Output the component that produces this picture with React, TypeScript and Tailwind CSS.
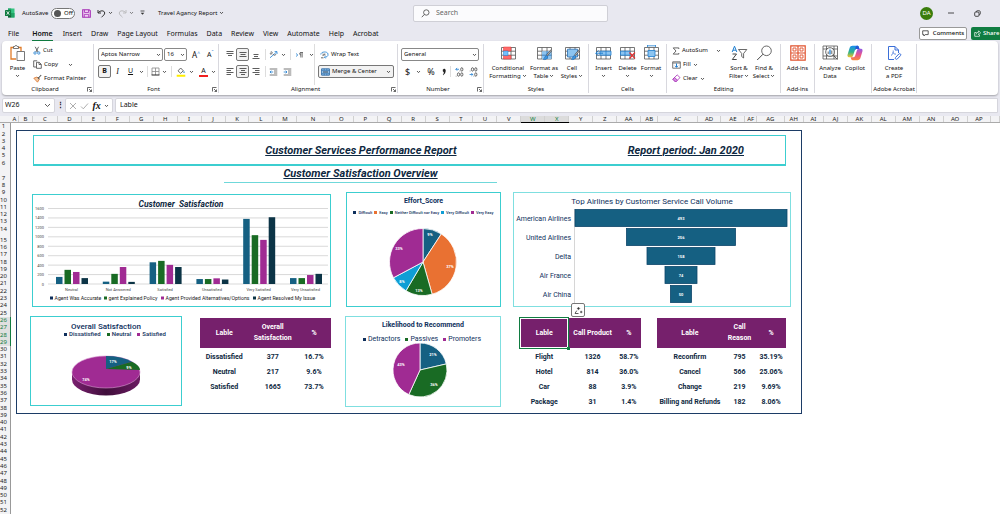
import React from "react";

const UI = "font-['Noto_Sans',sans-serif]";
const SHEET = "font-[Roboto,sans-serif]";

/* ---------- small icons ---------- */

type IconProps = { w?: number; h?: number; vb?: string; className?: string; children: React.ReactNode };

function Icon({ w = 10, h = 10, vb, className = "", children }: IconProps) {
  return (
    <svg
      width={w}
      height={h}
      viewBox={vb ?? `0 0 ${w} ${h}`}
      fill="none"
      stroke="#444"
      strokeWidth="0.8"
      className={`shrink-0 ${className}`}
      aria-hidden="true"
    >
      {children}
    </svg>
  );
}

function Chevron({ className = "" }: { className?: string }) {
  return (
    <Icon w={5} h={4} className={className}>
      <path d="M1 1 2.5 2.6 4 1" stroke="#333" />
    </Icon>
  );
}

function Launcher() {
  return (
    <Icon w={5} h={5}>
      <path d="M.5 4.500V.5h4M2 2l2.500 2.500M4.500 2.500v2h-2" stroke="#444" />
    </Icon>
  );
}

function AlignIcon({ lines }: { lines: [number, number, number][] }) {
  return (
    <Icon w={8} h={9}>
      {lines.map(([x1, x2, y]) => (
        <path key={y} d={`M${x1} ${y}H${x2}`} stroke="#333" />
      ))}
    </Icon>
  );
}

function CellGrid({ children }: { children?: React.ReactNode }) {
  return (
    <Icon w={17} h={16}>
      <path d="M1.500 2.500h14v11.500h-14zM1.500 6.200h14M1.500 10.200h14M6 2.500V14M11 2.500V14" stroke="#555" />
      {children}
    </Icon>
  );
}

const icons = {
  excel: (
    <Icon w={10} h={10}>
      <path d="M3 .5h6.500v9H3z" fill="#33c481" stroke="none" />
      <path d="M3 .5h3.200v4.500H3zM6.200 5h3.300v4.500H6.200z" fill="#21a366" stroke="none" />
      <path d="M3 5h3.200v4.500H3z" fill="#185c37" stroke="none" />
      <rect x="0" y="2" width="6" height="6" rx=".6" fill="#107c41" stroke="none" />
      <path d="M1.700 3.300 4.300 6.700M4.300 3.300 1.700 6.700" stroke="#fff" />
    </Icon>
  ),
  save: (
    <Icon w={9} h={9}>
      <path d="M.7.7h6.500l1.100 1.100v6.500H.7z" fill="#efd3f3" stroke="#a52fb5" strokeWidth="1.100" />
      <path d="M2.500.9v2.600h4V.9M2.300 8.200V5.400h4.400v2.800" stroke="#a52fb5" />
    </Icon>
  ),
  undo: (
    <Icon w={9} h={9}>
      <path d="M1 1v3h3M1.200 3.800C3 1.300 7.500 1 7.700 4 7.800 5.500 6.200 6.500 4.500 8.300" stroke="#333" strokeWidth="1" />
    </Icon>
  ),
  redo: (
    <Icon w={9} h={9}>
      <path d="M8 1v3H5M7.800 3.800C6 1.300 1.500 1 1.300 4 1.200 5.500 2.800 6.500 4.500 8.300" stroke="#aaa" strokeWidth="1" />
    </Icon>
  ),
  customize: (
    <Icon w={5} h={6}>
      <path d="M.5 1h4" stroke="#333" />
      <path d="M.7 2.800h3.600L2.500 4.800z" fill="#333" stroke="none" />
    </Icon>
  ),
  search: (
    <Icon w={9} h={9}>
      <circle cx="5.300" cy="3.500" r="2.700" />
      <path d="M3.300 5.500.8 8.200" />
    </Icon>
  ),
  comment: (
    <Icon w={7} h={7}>
      <path d="M.7.8h5.500v3.800H3.200L1.900 6V4.600H.7z" stroke="#333" />
    </Icon>
  ),
  share: (
    <Icon w={7} h={7}>
      <path d="M2.500 2.500H.7v3.800h4.800V4.800M2.300 4.300c.2-1.500 1.200-2.100 2.300-2.100V.8l2 2-2 2V3.500" stroke="#fff" strokeWidth=".7" />
    </Icon>
  ),
  paste: (
    <Icon w={17} h={17}>
      <path d="M5 2.500H2v11.500h5" stroke="#e07b28" strokeWidth="1.300" />
      <path d="M9 2.500h3V6" stroke="#e07b28" strokeWidth="1.300" />
      <path d="M4.500 3.500v-2h1.300c.3-1.500 2.100-1.500 2.400 0h1.300v2z" fill="#fff" stroke="#555" />
      <path d="M8 6.500h7.500v9H8z" fill="#fff" stroke="#555" />
    </Icon>
  ),
  cut: (
    <Icon w={8} h={9}>
      <path d="M2.200.8 5 6M5.600.8 2.900 6" stroke="#444" />
      <circle cx="2" cy="7" r="1.200" stroke="#1f7fd1" />
      <circle cx="5.800" cy="7" r="1.200" stroke="#1f7fd1" />
    </Icon>
  ),
  copy: (
    <Icon w={9} h={9}>
      <path d="M3 7H.7V.8h3.500M3.500 2.300h2.800L8.300 4.300v4H3.500zM6 2.500v2h2" stroke="#444" />
    </Icon>
  ),
  painter: (
    <Icon w={9} h={9}>
      <path d="M.8 4.200 4 3l2.300 2.300L4.500 8.200z" fill="#f3c9a4" stroke="#d9742b" />
      <path d="m4.700 3.400 1.700 1.700M5.500 4 8.200 1" stroke="#555" strokeWidth="1.100" />
    </Icon>
  ),
  borders: (
    <Icon w={9} h={9}>
      <path d="M1 1h7M1 1v7M8 1v7M4.500 1v7M1 4.500h7" stroke="#888" />
      <path d="M.6 8h7.800" stroke="#222" strokeWidth="1.100" />
    </Icon>
  ),
  fillColor: (
    <Icon w={10} h={10}>
      <path d="M2 3.800 4.700 1l2.600 2.800L4.600 6.300z" stroke="#444" />
      <path d="M8 4c.9 1.200.9 1.900 0 2-.9-.1-.9-.8 0-2z" fill="#1f7fd1" stroke="none" />
      <path d="M.7 7.800h8.600v2H.7z" fill="#ffee00" stroke="none" />
    </Icon>
  ),
  orientation: (
    <Icon w={9} h={9}>
      <path d="m1 7.800 6.800-6M8 4V1.600H5.600" stroke="#1f7fd1" />
      <path d="M1.500 2.200c1.500-1 2.300.5 1.300 1.500S.8 4 1.500 3.200M4 4.200c1 1.500 3 1.300 2.600 0" stroke="#444" />
    </Icon>
  ),
  direction: (
    <Icon w={9} h={8}>
      <path d="M1 2.500 2.800 4 1 5.500" stroke="#1f7fd1" />
      <path d="M8 1.500H5.500M5.800 1.500v5M7.200 1.500v5M5.800 1.500C4.200 1.500 4.200 4 5.800 4" stroke="#444" strokeWidth=".7" />
    </Icon>
  ),
  outdent: (
    <Icon w={9} h={8}>
      <path d="M.7 1h7.600M.7 7h7.600M5 3h3.300M5 5h3.300" stroke="#555" />
      <path d="M4.200 4H1M2.300 2.700 1 4l1.300 1.300" stroke="#1f7fd1" />
    </Icon>
  ),
  indent: (
    <Icon w={9} h={8}>
      <path d="M.7 1h7.600M.7 7h7.600M5 3h3.300M5 5h3.300" stroke="#555" />
      <path d="M.7 4H4M2.700 2.700 4 4 2.700 5.300" stroke="#1f7fd1" />
    </Icon>
  ),
  wrap: (
    <Icon w={9} h={8}>
      <path d="M.8 3.500c0-3 6.500-3.500 7.200-.6.400 2.700-1.700 3.300-3.500 3.300M5.600 5 4.400 6.200l1.200 1.200" stroke="#1f7fd1" />
      <path d="M2.500 3c2-.4 1.500 2 0 1.600M1 6.800h2.500M4.800 2.500v2" stroke="#444" />
    </Icon>
  ),
  merge: (
    <Icon w={9} h={8}>
      <path d="M.6.8h7.800v6.400H.6z" fill="#9cc8ee" stroke="#1f5f9e" />
      <path d="M.6 2.400h7.800M.6 5.700h7.800M3.200.8v1.500M5.800.8v1.500M3.200 5.700v1.500M5.800 5.700v1.500" stroke="#1f5f9e" strokeWidth=".6" />
      <path d="M2 4h5" stroke="#123" />
    </Icon>
  ),
  moreDecimal: (
    <Icon w={9} h={10}>
      <path d="M4 2.300H.8M2.200.9.8 2.300l1.400 1.400" stroke="#1f7fd1" />
      <ellipse cx="6.800" cy="2.400" rx="1.100" ry="1.700" />
      <ellipse cx="3.500" cy="7.500" rx="1.100" ry="1.700" />
      <ellipse cx="6.800" cy="7.500" rx="1.100" ry="1.700" />
      <path d="M.8 9.200h.6M4.600 4h.6" />
    </Icon>
  ),
  lessDecimal: (
    <Icon w={9} h={10}>
      <path d="M.6 7.500h3.200M2.400 6.100l1.400 1.400-1.400 1.400" stroke="#1f7fd1" />
      <ellipse cx="3.500" cy="2.400" rx="1.100" ry="1.700" />
      <ellipse cx="6.800" cy="2.400" rx="1.100" ry="1.700" />
      <ellipse cx="6.800" cy="7.500" rx="1.100" ry="1.700" />
      <path d="M.8 4h.6M4.600 9.200h.6" />
    </Icon>
  ),
  conditional: (
    <CellGrid>
      <path d="M3.500 2h7.500v4H3.500zM3.500 10.500H11V14H3.500z" fill="#ff6b6b" stroke="#e03131" strokeWidth=".5" />
      <path d="M3.500 6H8v4.500H3.500z" fill="#74c0fc" stroke="#1f7fd1" strokeWidth=".5" />
    </CellGrid>
  ),
  formatTable: (
    <CellGrid>
      <path d="M6 6.200h9.500V14H6z" fill="#8cc4f0" stroke="none" />
      <path d="M6 10.200h9.500M11 6.200V14" stroke="#2d72b5" />
      <path d="m15.500 5-5 6" stroke="#444" strokeWidth="1.800" />
      <path d="m15.500 5-5 6" stroke="#fff" strokeWidth=".6" />
      <path d="M10.500 10.500c-2 .3-1.500 2.800-3.300 3.800 2.300.9 4.600-.3 4.500-2.800z" fill="#3d95e0" stroke="#1763ab" strokeWidth=".5" />
    </CellGrid>
  ),
  cellStyles: (
    <CellGrid>
      <path d="M3.500 4.200h10V12h-10z" fill="#8cc4f0" stroke="#2d72b5" />
      <path d="m15.500 5-5 6" stroke="#444" strokeWidth="1.800" />
      <path d="m15.500 5-5 6" stroke="#fff" strokeWidth=".6" />
      <path d="M10.500 10.500c-2 .3-1.500 2.800-3.300 3.800 2.300.9 4.600-.3 4.500-2.800z" fill="#3d95e0" stroke="#1763ab" strokeWidth=".5" />
    </CellGrid>
  ),
  insert: (
    <CellGrid>
      <path d="M5 6.200h11v4H5z" fill="#8cc4f0" stroke="#1f7fd1" />
      <path d="M11 6.200v4" stroke="#1f7fd1" />
      <path d="M8 8.200H.8M3.500 5.500.8 8.200l2.700 2.700" stroke="#1f7fd1" strokeWidth="1" />
    </CellGrid>
  ),
  remove: (
    <CellGrid>
      <path d="M1.500 6.200H11v4H1.500z" fill="#8cc4f0" stroke="#1f7fd1" />
      <path d="M6 6.200v4" stroke="#1f7fd1" />
      <path d="m10.500 7.500 5.500 6M16 7.500l-5.500 6" stroke="#e03131" strokeWidth="1.200" />
    </CellGrid>
  ),
  format: (
    <CellGrid>
      <path d="M5 5.500h7v6H5z" fill="#8cc4f0" stroke="#1f7fd1" />
      <path d="M4.500.8h8M4.500-.5v2.500M12.500-.5v2.500" stroke="#1f7fd1" />
    </CellGrid>
  ),
  sum: (
    <Icon w={8} h={8}>
      <path d="M6.800 2V.9H1.200L4 4 1.200 7.100h5.600V6" stroke="#444" />
    </Icon>
  ),
  fillDown: (
    <Icon w={9} h={8}>
      <path d="M.7.8h7.600v6.400H.7zM.7 2h7.600" stroke="#555" />
      <path d="M4.500 2.500v3.700M3 4.800l1.500 1.500L6 4.800" stroke="#1f7fd1" strokeWidth="1" />
    </Icon>
  ),
  clear: (
    <Icon w={9} h={9}>
      <path d="M.8 5.200 5.200.9 8 3.600 3.600 8z" stroke="#a52fb5" />
      <path d="M.8 5.200 2.600 3.400l2.800 2.800L3.600 8z" fill="#d58be0" stroke="#a52fb5" />
    </Icon>
  ),
  sort: (
    <Icon w={17} h={16}>
      <path d="M1.200 7 3.500 1.200 5.800 7M2 5.200h3" stroke="#1f7fd1" strokeWidth="1" />
      <path d="M1.500 9h4L1.300 14.500h4.400" stroke="#444" strokeWidth="1" />
      <path d="M7.500 4.500h8.300l-3.200 4v4.500l-1.900-1.500v-3z" stroke="#444" />
    </Icon>
  ),
  find: (
    <Icon w={17} h={16}>
      <circle cx="10.500" cy="5.800" r="4.800" />
      <path d="M7 9.200 1.200 15" strokeWidth="1" />
    </Icon>
  ),
  addins: (
    <Icon w={16} h={16}>
      <path d="M.8.8h14.400v14.400H.8zM8 .8v14.400M.8 8h14.400" stroke="#e0512c" strokeWidth="1.200" />
      <path d="M3 3h3v3H3zM10 3h3v3h-3zM3 10h3v3H3zM10 10h3v3h-3z" stroke="#e0512c" strokeWidth=".9" />
    </Icon>
  ),
  analyze: (
    <Icon w={17} h={16}>
      <path d="M1 1h14.500v13H1zM1 4h14.500M1 11h14.500M4.500 1v13M12 1v13" stroke="#555" />
      <circle cx="8" cy="7" r="4.300" fill="#fff" stroke="#444" />
      <path d="M6.200 9V6.500" stroke="#444" />
      <path d="M8 9.500V4.500" stroke="#1f7fd1" strokeWidth="1.300" />
      <path d="M9.800 9V5.500M11.200 10.200 15.500 14.500" stroke="#444" />
    </Icon>
  ),
  copilot: (
    <Icon w={16} h={16} vb="0 0 16 16">
      <defs>
        <linearGradient id="cpA" x1="0" y1="0" x2="0" y2="1">
          <stop offset="0" stopColor="#1a8df0" />
          <stop offset=".55" stopColor="#2fb58b" />
          <stop offset="1" stopColor="#f4c22b" />
        </linearGradient>
        <linearGradient id="cpB" x1="0" y1="0" x2="0" y2="1">
          <stop offset="0" stopColor="#8f5be8" />
          <stop offset=".5" stopColor="#e8548f" />
          <stop offset="1" stopColor="#f98a3c" />
        </linearGradient>
      </defs>
      <path d="M5.500.8h4.800c1 0 1.400.7 1.700 1.600l.4 1.500H9.600c-1 0-1.500.7-1.800 1.600L6.300 10c-.5 1.600-1 2.200-2.300 2.200H2C.6 12.200.2 10.900.6 9.500l2-6.500C3.100 1.600 4 .8 5.500.8z" fill="url(#cpA)" stroke="none" />
      <path d="M10.500 15.200H5.700c-1 0-1.400-.7-1.700-1.600l-.3-1.400h2.700c1 0 1.500-.7 1.800-1.600L9.700 6c.5-1.600 1-2.200 2.300-2.200h2c1.400 0 1.800 1.300 1.400 2.700l-2 6.500c-.5 1.400-1.400 2.200-2.900 2.200z" fill="url(#cpB)" stroke="none" />
      <path d="M10.300.8c1 0 1.400.7 1.700 1.600l.4 1.500H9.600c-.9 0-1.400.6-1.700 1.300L8.600 2.300C8.900 1.300 9.400.8 10.300.8z" fill="#2357d8" stroke="none" />
    </Icon>
  ),
  pdf: (
    <Icon w={15} h={16}>
      <path d="M7 14.500H1.500V1.500h6.500l3.500 3.500v3M8 1.500V5h3.500" stroke="#3b6fd8" strokeWidth="1" />
      <path d="M4 10.500c2-1 2.500-3.500 2.200-5M6 7.500c.8 1.500 2 1.800 3 1.500" stroke="#3b6fd8" />
      <path d="M8.500 12.500 11.800 9c1.200-1 2.700.4 1.700 1.600L10.300 14c-1.100 1-2.700-.4-1.800-1.500z" stroke="#3b6fd8" strokeWidth="1" />
    </Icon>
  ),
};

/* ---------- title bar and tabs ---------- */

function IconButton({ label, className = "", children }: { label: string; className?: string; children: React.ReactNode }) {
  return (
    <button aria-label={label} className={`flex shrink-0 items-center justify-center ${className}`}>
      {children}
    </button>
  );
}

function TitleBar() {
  return (
    <header className="grid h-[26px] grid-cols-[413fr_195fr_392fr] items-center text-[6px] text-[#111]">
      <div className="flex items-center pl-[5px] whitespace-nowrap">
        {icons.excel}
        <span className="ml-[7px] w-[29px]">AutoSave</span>
        <button role="switch" aria-checked="false" aria-label="AutoSave" className="flex h-[11px] w-[24px] items-center gap-[3px] rounded-full border border-[#777] bg-white pl-[2px]">
          <span className="size-[7px] rounded-full bg-[#555]" />
          Off
        </button>
        <IconButton label="Save" className="ml-[7px]">{icons.save}</IconButton>
        <IconButton label="Undo" className="ml-[6px] gap-[2px]">{icons.undo}<Chevron /></IconButton>
        <IconButton label="Redo" className="ml-[5px] gap-[2px] opacity-70">{icons.redo}<Chevron /></IconButton>
        <IconButton label="Customize toolbar" className="ml-[6px]">{icons.customize}</IconButton>
        <button className="ml-[13px] flex items-center gap-[2px]">Travel Agancy Report <Chevron /></button>
      </div>
      <label className="flex h-[17px] items-center gap-[6px] rounded-[2px] border border-[#cfcfd6] bg-[#fbfbfd] px-[7px] text-[7px]">
        {icons.search}
        <input aria-label="Search" placeholder="Search" className="w-full bg-transparent outline-none placeholder:text-[#666]" />
      </label>
      <div className="flex items-center justify-end pr-[19px]">
        <span className="flex size-[13px] items-center justify-center rounded-full bg-[#3a7d0c] text-white">DA</span>
        <IconButton label="Minimize" className="ml-[15px]">
          <Icon w={6} h={6}><path d="M0 3h6" stroke="#222" /></Icon>
        </IconButton>
        <IconButton label="Restore" className="ml-[20px]">
          <Icon w={7} h={7}>
            <rect x=".7" y="2" width="4.300" height="4.300" rx="1" stroke="#222" />
            <path d="M2.300 1.800C2.300 1 2.800.7 3.500.7h1.300c1 0 1.500.5 1.500 1.500v1.300c0 .7-.3 1.200-1 1.200" stroke="#222" />
          </Icon>
        </IconButton>
      </div>
    </header>
  );
}

const tabs = ["File", "Home", "Insert", "Draw", "Page Layout", "Formulas", "Data", "Review", "View", "Automate", "Help", "Acrobat"];

function TabBar() {
  return (
    <nav className="flex h-[15px] items-center justify-between pl-[8px] text-[7px] text-[#111]">
      <div className="flex items-center gap-[9px] pt-[2px]">
        {tabs.map((t) => (
          <button
            key={t}
            className={t === "Home" ? "ml-[4px] mr-px border-b border-[#107c41] leading-[12px] font-semibold" : "border-b border-transparent leading-[12px]"}
          >
            {t}
          </button>
        ))}
      </div>
      <div className="flex gap-[4px] text-[6px] whitespace-nowrap">
        <button className="flex h-[13px] w-[48px] items-center justify-center gap-[4px] rounded-[2px] border border-[#999] bg-white font-medium">
          {icons.comment} Comments
        </button>
        <button className="flex h-[13px] w-[29px] items-center gap-[2px] rounded-l-[2px] bg-[#107c41] pl-[3px] font-medium text-white">
          {icons.share} Share
        </button>
      </div>
    </nav>
  );
}

/* ---------- ribbon ---------- */

function Group({ name, launcher, width, children }: { name: string; launcher?: boolean; width: string; children: React.ReactNode }) {
  return (
    <section className={`flex shrink-0 flex-col border-r border-[#d8d8de] ${width}`}>
      <div className="flex h-[41px] items-stretch">{children}</div>
      <div className="flex h-[8px] items-center px-[1px]">
        <span className="flex-1 text-center leading-[8px] whitespace-nowrap">{name}</span>
        {launcher && <IconButton label={`${name} options`}><Launcher /></IconButton>}
      </div>
    </section>
  );
}

function BigButton({ icon, lines, chevron, below, width }: { icon: React.ReactNode; lines: string[]; chevron?: boolean; below?: boolean; width: string }) {
  return (
    <button className={`flex flex-col items-center pt-[1px] whitespace-nowrap ${width}`}>
      <span className="flex h-[19px] items-start">{icon}</span>
      {lines.map((l, i) => (
        <span key={l} className="flex items-center leading-[8px]">
          {l}
          {chevron && i === lines.length - 1 && <Chevron className="ml-px" />}
        </span>
      ))}
      {below && <Chevron className="mt-[2px]" />}
    </button>
  );
}

function SmallButton({ icon, label, gap = "", chevron }: { icon: React.ReactNode; label: string; gap?: string; chevron?: boolean }) {
  return (
    <button className="flex items-center gap-[2px] leading-[9px] whitespace-nowrap">
      {icon}
      <span>{label}</span>
      {chevron && <Chevron className={gap} />}
    </button>
  );
}

function Select({ label, value, width }: { label: string; value: string; width: string }) {
  return (
    <label className={`grid items-center ${width}`}>
      <select aria-label={label} className="col-start-1 row-start-1 h-[13px] w-full appearance-none rounded-[2px] border border-[#888] bg-white px-[2px] outline-none">
        <option>{value}</option>
      </select>
      <Chevron className="pointer-events-none col-start-1 row-start-1 mr-[2px] justify-self-end" />
    </label>
  );
}

const pressed = "rounded-[2px] border border-[#777] bg-[#f2f2f2]";
const box = "flex h-[13px] w-[13px] items-center justify-center shrink-0";
const rule = "h-[11px] w-px bg-[#ddd]";

function Ribbon() {
  return (
    <div className="mx-[2px] flex h-[54px] overflow-hidden rounded-[4px] bg-white pt-[3px] pb-[2px] text-[6px] text-[#111] shadow-[0_1px_2px_rgba(0,0,0,0.3)]">
      <Group name="Clipboard" launcher width="w-[92px]">
        <BigButton icon={icons.paste} lines={["Paste"]} below width="w-[31px]" />
        <div className="flex flex-col justify-between pt-[2px] pb-[2px]">
          <SmallButton icon={icons.cut} label="Cut" />
          <SmallButton icon={icons.copy} label="Copy" chevron gap="ml-[8px]" />
          <SmallButton icon={icons.painter} label="Format Painter" />
        </div>
      </Group>

      <Group name="Font" launcher width="w-[125px]">
        <div className="flex flex-col gap-[4px] pt-[4px] pl-[4px]">
          <div className="flex items-center gap-[1px]">
            <Select label="Font" value="Aptos Narrow" width="w-[65px]" />
            <Select label="Font size" value="16" width="w-[23px]" />
            <button className="ml-[4px] text-[8px] leading-[10px]">A<sup className="text-[5px] text-[#1f7fd1]">^</sup></button>
            <button className="ml-[6px] text-[7px] leading-[10px]">A<sup className="text-[5px] text-[#1f7fd1]">ˇ</sup></button>
          </div>
          <div className="flex items-center">
            <button aria-pressed="true" className={`${box} ${pressed} text-[7px] font-bold`}>B</button>
            <button className={`${box} font-['Liberation_Serif',serif] text-[8px] italic`}>I</button>
            <button className={`${box} text-[7px] underline`}>U</button>
            <Chevron className="ml-[2px]" />
            <span className={`mx-[3px] ${rule}`} />
            <IconButton label="Borders">{icons.borders}</IconButton>
            <Chevron className="ml-[2px]" />
            <span className={`mx-[4px] ${rule}`} />
            <IconButton label="Fill color">{icons.fillColor}</IconButton>
            <Chevron className="ml-[3px]" />
            <button className="ml-[5px] flex h-[10px] w-[9px] items-center justify-center border-b-2 border-[#f02020] text-[7px] leading-[8px]">A</button>
            <Chevron className="ml-[3px]" />
          </div>
        </div>
      </Group>

      <Group name="Alignment" launcher width="w-[179px]">
        <div className="flex flex-col gap-[4px] pt-[4px] pl-[4px]">
          <div className="flex items-center">
            <button aria-label="Top align" className={box}><AlignIcon lines={[[0.5, 7.5, 1.5], [0.5, 7.5, 3.5], [2, 6, 5.5]]} /></button>
            <button aria-label="Middle align" className={`${box} ${pressed}`}><AlignIcon lines={[[0.5, 7.5, 2.5], [1.5, 6.5, 4.5], [0.5, 7.5, 6.5]]} /></button>
            <button aria-label="Bottom align" className={box}><AlignIcon lines={[[1.5, 6.5, 4.5], [2, 6, 6.5], [0.5, 7.5, 8.5]]} /></button>
            <span className={`mx-[3px] ${rule}`} />
            <IconButton label="Orientation">{icons.orientation}</IconButton>
            <Chevron className="ml-[3px]" />
            <span className={`mx-[4px] ${rule}`} />
            <IconButton label="Text direction">{icons.direction}</IconButton>
            <Chevron className="ml-[5px]" />
          </div>
          <div className="flex items-center">
            <button aria-label="Align left" className={box}><AlignIcon lines={[[0.5, 7.5, 1.5], [0.5, 5, 3.5], [0.5, 7.5, 5.5], [0.5, 5, 7.5]]} /></button>
            <button aria-label="Center" className={`${box} ${pressed}`}><AlignIcon lines={[[0.5, 7.5, 1.5], [2, 6, 3.5], [0.5, 7.5, 5.5], [2, 6, 7.5]]} /></button>
            <button aria-label="Align right" className={box}><AlignIcon lines={[[0.5, 7.5, 1.5], [3, 7.5, 3.5], [0.5, 7.5, 5.5], [3, 7.5, 7.5]]} /></button>
            <span className={`mx-[3px] ${rule}`} />
            <IconButton label="Decrease indent">{icons.outdent}</IconButton>
            <IconButton label="Increase indent" className="ml-[5px]">{icons.indent}</IconButton>
          </div>
        </div>
        <div className="ml-auto flex flex-col gap-[4px] border-l border-[#ddd] pt-[4px] pr-[5px] pl-[3px]">
          <button className="flex h-[13px] items-center gap-[2px] px-[2px]">{icons.wrap} Wrap Text</button>
          <button className={`flex h-[13px] w-[76px] items-center gap-[2px] px-[2px] ${pressed}`}>
            {icons.merge} Merge &amp; Center <Chevron className="ml-auto" />
          </button>
        </div>
      </Group>

      <Group name="Number" launcher width="w-[86px]">
        <div className="flex flex-col gap-[4px] pt-[4px] pl-[3px]">
          <Select label="Number format" value="General" width="w-[78px]" />
          <div className="flex h-[13px] items-center text-[9px] leading-[13px]">
            <button className="ml-[4px]">$</button>
            <Chevron className="ml-[6px]" />
            <button className="ml-[6px]">%</button>
            <button aria-label="Comma style" className="ml-[7px]">
              <Icon w={4} h={8}><path d="M1 2.200C1 .6 3.500.6 3.500 2.500 3.500 4.500 2.500 6 1.200 7 2 5.500 2 4.500 2 4 1.300 4 1 3 1 2.200z" fill="#222" stroke="#222" strokeWidth=".4" /></Icon>
            </button>
            <span className={`mx-[4px] ${rule}`} />
            <IconButton label="Increase decimal">{icons.moreDecimal}</IconButton>
            <IconButton label="Decrease decimal" className="ml-[5px]">{icons.lessDecimal}</IconButton>
          </div>
        </div>
      </Group>

      <Group name="Styles" width="w-[105px]">
        <BigButton icon={icons.conditional} lines={["Conditional", "Formatting"]} chevron width="w-[44px] ml-[2px]" />
        <BigButton icon={icons.formatTable} lines={["Format as", "Table"]} chevron width="w-[28px]" />
        <BigButton icon={icons.cellStyles} lines={["Cell", "Styles"]} chevron width="w-[28px]" />
      </Group>

      <Group name="Cells" width="w-[78px]">
        <BigButton icon={icons.insert} lines={["Insert"]} below width="w-[25px] ml-[2px]" />
        <BigButton icon={icons.remove} lines={["Delete"]} below width="w-[23px]" />
        <BigButton icon={icons.format} lines={["Format"]} below width="w-[24px]" />
      </Group>

      <Group name="Editing" width="w-[114px]">
        <div className="flex w-[59px] flex-col justify-between pt-[2px] pb-[2px] pl-[5px]">
          <SmallButton icon={icons.sum} label="AutoSum" chevron gap="ml-[6px]" />
          <SmallButton icon={icons.fillDown} label="Fill" chevron />
          <SmallButton icon={icons.clear} label="Clear" chevron />
        </div>
        <BigButton icon={icons.sort} lines={["Sort &", "Filter"]} chevron width="w-[26px]" />
        <BigButton icon={icons.find} lines={["Find &", "Select"]} chevron width="w-[24px]" />
      </Group>

      <Group name="Add-ins" width="w-[34px]">
        <BigButton icon={icons.addins} lines={["Add-ins"]} width="w-[33px]" />
      </Group>

      <Group name="" width="w-[57px]">
        <BigButton icon={icons.analyze} lines={["Analyze", "Data"]} width="w-[28px] ml-[1px]" />
        <BigButton icon={icons.copilot} lines={["Copilot"]} width="w-[22px]" />
      </Group>

      <Group name="Adobe Acrobat" width="w-[45px]">
        <BigButton icon={icons.pdf} lines={["Create", "a PDF"]} width="w-[44px]" />
      </Group>
    </div>
  );
}

function FormulaBar() {
  return (
    <div className="mt-[3px] flex h-[15px] items-stretch gap-[2px] px-[2px] text-[7px] text-[#111]">
      <label className="flex w-[53px] items-center rounded-[2px] border border-[#d5d5dc] bg-white pr-[3px] pl-[2px]">
        <input aria-label="Name box" defaultValue="W26" className="w-full min-w-0 bg-transparent outline-none" />
        <Icon w={7} h={5}><path d="m1 1 2.500 2.500L6 1" stroke="#333" /></Icon>
      </label>
      <span className="flex w-[6px] items-center justify-center font-bold">⋮</span>
      <div className="flex w-[48px] items-center justify-between rounded-[2px] border border-[#d5d5dc] bg-white px-[3px]">
        <IconButton label="Cancel"><Icon w={8} h={8}><path d="m1 1 6 6M7 1 1 7" stroke="#999" /></Icon></IconButton>
        <IconButton label="Enter"><Icon w={9} h={8}><path d="m1 4.500 2.300 2.300L8 1.500" stroke="#999" /></Icon></IconButton>
        <button className="font-['Liberation_Serif',serif] text-[10px] leading-[12px] font-bold italic">fx</button>
        <Chevron />
      </div>
      <input aria-label="Formula" defaultValue="Lable" className="flex-1 rounded-l-[2px] border border-[#d5d5dc] bg-white px-[4px] outline-none" />
    </div>
  );
}

/* ---------- sheet headers ---------- */

const columns: [string, number][] = [
  ["A", 7], ["B", 14], ["C", 25], ["D", 24], ["E", 24], ["F", 24], ["G", 24], ["H", 24], ["I", 24], ["J", 24], ["K", 24],
  ["L", 24], ["M", 24], ["N", 33], ["O", 24], ["P", 24], ["Q", 24], ["R", 24], ["S", 24], ["T", 24], ["U", 24], ["V", 24],
  ["W", 24], ["X", 24], ["Y", 24], ["Z", 24], ["AA", 24], ["AB", 17], ["AC", 40], ["AD", 24], ["AE", 24], ["AF", 11],
  ["AG", 28], ["AH", 19], ["AI", 20], ["AJ", 24], ["AK", 24], ["AL", 24], ["AM", 24], ["AN", 24], ["AO", 24], ["AP", 24], ["", 8],
];

function ColumnHeaders() {
  return (
    <div className="mt-[3px] flex h-[7px] border-b border-[#aaa] bg-[#f3f3f5] pl-[11px] text-[6px] leading-[6px] text-[#222]">
      {columns.map(([name, w]) => {
        const on = name === "W" || name === "X";
        return (
          <span
            key={name || "end"}
            style={{ flexGrow: w }}
            className={`min-w-0 basis-0 border-r border-[#d0d0d0] text-center ${on ? "bg-[#dcdcdc] text-[#107c41] shadow-[0_1px_0_#000]" : ""}`}
          >
            {name}
          </span>
        );
      })}
    </div>
  );
}

const rows = Array.from({ length: 52 }, (_, i) => i + 1);
const rowWeight = (n: number) => (n === 7 ? 15 : n === 15 ? 11 : 7.35);

function RowHeaders() {
  return (
    <div className="flex w-[11px] shrink-0 flex-col border-r border-[#999] bg-[#f3f3f5] text-[6px] leading-[7px] text-[#222]">
      {rows.map((n) => {
        const on = n >= 26 && n <= 29;
        return (
          <span
            key={n}
            style={{ flexGrow: rowWeight(n) }}
            className={`flex min-h-0 basis-0 items-end justify-center pr-[3px] ${on ? "bg-[#e0e0e0] text-[#107c41] shadow-[1px_0_0_#107c41]" : ""}`}
          >
            {n}
          </span>
        );
      })}
    </div>
  );
}

/* ---------- charts ---------- */

const C = { blue: "#156082", orange: "#e97132", green: "#196b24", sky: "#0f9ed5", purple: "#a02b93", dark: "#0c3446", navy: "#0e2f5c" };

function Legend({ items, className }: { items: [string, string][]; className: string }) {
  return (
    <ul className={`flex justify-center whitespace-nowrap text-[#0e2f5c] ${className}`}>
      {items.map(([label, color]) => (
        <li key={label} className="flex items-center gap-[2px]">
          <span style={{ backgroundColor: color }} className="size-[3px] shrink-0" />
          {label}
        </li>
      ))}
    </ul>
  );
}

const satisfaction = [
  { name: "Neutral", v: [150, 300, 255, 125] },
  { name: "Not Answered", v: [50, 215, 360, 45] },
  { name: "Satisfied", v: [460, 490, 405, 360] },
  { name: "Unsatisfied", v: [105, 105, 120, 95] },
  { name: "Very Satisfied", v: [1380, 1035, 935, 1415] },
  { name: "Very Unsatisfied", v: [125, 125, 190, 215] },
];

const agentSeries: [string, number, string][] = [
  ["Agent Was Accurate", 17, C.navy],
  ["gent Explained Policy", 71, C.green],
  ["Agent Provided Alternatives/Options", 128, C.purple],
  ["Agent Resolved My Issue", 220, C.dark],
];

function SatisfactionChart() {
  const fills = [C.blue, C.green, C.purple, C.dark];
  const base = 89;
  const scale = 75.5 / 1600;
  return (
    <figure className="border border-[#3cced0]">
      <svg viewBox="0 0 297 111" className="block w-full" fontFamily="Roboto, sans-serif">
        <text x="148" y="11.500" textAnchor="middle" fontSize="8.500" fontWeight="700" fontStyle="italic" fill="#0e2841">
          Customer&#160; Satisfaction
        </text>
        <path d="M106 13.500h84" stroke="#0e2841" strokeWidth="0.8" />
        {Array.from({ length: 9 }, (_, i) => i * 200).map((v) => (
          <g key={v}>
            <path d={`M15 ${base - v * scale}H295`} stroke="#cfcfcf" strokeWidth="0.8" />
            <text x="11" y={base - v * scale + 1.5} textAnchor="end" fontSize="4" fill="#444">{v}</text>
          </g>
        ))}
        {satisfaction.map((g, gi) => (
          <g key={g.name}>
            {g.v.map((v, i) => (
              <rect key={i} x={23 + gi * 46.8 + i * 8.5} y={base - v * scale} width="6.500" height={v * scale} fill={fills[i]} />
            ))}
            <text x={38.5 + gi * 46.8} y="96" textAnchor="middle" fontSize="4" fill="#444">{g.name}</text>
          </g>
        ))}
        {agentSeries.map(([t, x, c]) => (
          <g key={t}>
            <rect x={x} y="101.500" width="3" height="3" fill={c} />
            <text x={x + 4.5} y="105" fontSize="5.200" fill="#222">{t}</text>
          </g>
        ))}
      </svg>
    </figure>
  );
}

type Slice = { share: number; color: string; label: string; at: [number, number] };

function Pie({ cx, cy, r, slices }: { cx: number; cy: number; r: number; slices: Slice[] }) {
  let sum = 0;
  const pt = (s: number) => {
    const a = s * 2 * Math.PI;
    return `${(cx + r * Math.sin(a)).toFixed(2)} ${(cy - r * Math.cos(a)).toFixed(2)}`;
  };
  return (
    <g>
      {slices.map((s) => {
        const from = pt(sum);
        sum += s.share;
        return (
          <path
            key={s.label}
            d={`M${cx} ${cy}L${from}A${r} ${r} 0 ${s.share > 0.5 ? 1 : 0} 1 ${pt(sum)}Z`}
            fill={s.color}
            stroke="#fff"
            strokeWidth="0.8"
          />
        );
      })}
      {slices.map((s) => (
        <text key={s.label} x={s.at[0]} y={s.at[1]} textAnchor="middle" fontSize="4" fontWeight="700" fill="#fff">{s.label}</text>
      ))}
    </g>
  );
}

function EffortChart() {
  return (
    <figure className="border border-[#3cced0] text-center">
      <figcaption className="pt-[4px] text-[7px] leading-[9px] font-bold text-[#0e2f5c]">Effort_Score</figcaption>
      <Legend
        className="mt-[4px] gap-[2px] text-[4px] leading-[5px] font-medium"
        items={[["Difficult", C.navy], ["Easy", C.orange], ["Neither Difficult nor Easy", C.green], ["Very Difficult", C.sky], ["Very Easy", C.purple]]}
      />
      <svg viewBox="0 0 153 91" className="block w-full" fontFamily="Roboto, sans-serif">
        <Pie
          cx={76} cy={47} r={33.5}
          slices={[
            { share: 0.092, color: C.blue, label: "9%", at: [83, 21] },
            { share: 0.364, color: C.orange, label: "37%", at: [103, 53] },
            { share: 0.129, color: C.green, label: "13%", at: [72, 77] },
            { share: 0.087, color: C.sky, label: "8%", at: [55, 68] },
            { share: 0.328, color: C.purple, label: "33%", at: [52, 35] },
          ]}
        />
      </svg>
    </figure>
  );
}

const airlines: [string, number, number][] = [
  ["American Airlines", 493, 212],
  ["United Airlines", 256, 109],
  ["Delta", 158, 68],
  ["Air France", 74, 32],
  ["Air China", 50, 21],
];

function FunnelChart() {
  return (
    <figure className="border border-[#7fdfe0] text-center">
      <figcaption className="pt-[4px] text-[8px] leading-[9px] text-[#0e2f5c]">Top Airlines by Customer Service Call Volume</figcaption>
      <svg viewBox="0 0 276 100" className="block w-full" fontFamily="Roboto, sans-serif">
        <path d="M60.500 3v95" stroke="#ccc" strokeWidth="0.800" />
        {airlines.map(([name, value, w], i) => (
          <g key={name}>
            <text x="57" y={14.5 + i * 19} textAnchor="end" fontSize="7" fill={C.navy}>{name}</text>
            <rect x={167 - w / 2} y={3.5 + i * 19} width={w} height="17" fill="#156082" stroke="#0d466a" strokeWidth="0.800" />
            <text x="167" y={13.5 + i * 19} textAnchor="middle" fontSize="4" fontWeight="700" fill="#fff">{value}</text>
          </g>
        ))}
      </svg>
    </figure>
  );
}

function OverallChart() {
  return (
    <figure className="self-start border border-[#3cced0] text-center">
      <figcaption className="pt-[5px] text-[8px] leading-[9px] font-medium text-[#0e2f5c]">Overall Satisfaction</figcaption>
      <Legend className="gap-[6px] pl-[18px] text-[6px] leading-[6px] font-medium" items={[["Dissatisfied", C.navy], ["Neutral", C.green], ["Satisfied", C.purple]]} />
      <svg viewBox="0 0 150 68" className="block w-full" fontFamily="Roboto, sans-serif">
        <defs>
          <linearGradient id="rim" x1="0" x2="1">
            <stop offset="0" stopColor="#7a2070" />
            <stop offset=".5" stopColor="#3f0e3a" />
            <stop offset="1" stopColor="#6b1b62" />
          </linearGradient>
        </defs>
        <path d="M41 35v7.500a34 16 0 0 0 68 0V35z" fill="url(#rim)" />
        <ellipse cx="75" cy="35" rx="34" ry="16" fill={C.purple} stroke="#d79ad0" strokeWidth="0.600" />
        <path d="M75 32V19a34 16 0 0 1 26 5.700z" fill={C.blue} />
        <path d="M75 32l26-7.300q8 4 8 8.300z" fill={C.green} />
        <g fontSize="4" fontWeight="700" fill="#fff" textAnchor="middle">
          <text x="82" y="26">17%</text>
          <text x="98" y="31.500">9%</text>
          <text x="55" y="43.500">74%</text>
        </g>
      </svg>
    </figure>
  );
}

function RecommendChart() {
  return (
    <figure className="self-start border border-[#7fdfe0] text-center">
      <figcaption className="pt-[4px] text-[7px] leading-[9px] font-bold text-[#0e2f5c]">Likelihood to Recommend</figcaption>
      <Legend className="mt-[6px] gap-[5px] pr-[2px] text-[7px] leading-[7px]" items={[["Detractors", C.navy], ["Passives", C.green], ["Promoters", C.purple]]} />
      <svg viewBox="0 0 154 63" className="block w-full" fontFamily="Roboto, sans-serif">
        <Pie
          cx={74} cy={27} r={27}
          slices={[
            { share: 0.214, color: C.blue, label: "21%", at: [87, 12.5] },
            { share: 0.354, color: C.green, label: "36%", at: [88, 43] },
            { share: 0.432, color: C.purple, label: "43%", at: [55, 22.5] },
          ]}
        />
      </svg>
    </figure>
  );
}

/* ---------- tables ---------- */

type TableProps = { head: string[]; widths: string[]; data: string[][]; active?: boolean };

function DataTable({ head, widths, data, active }: TableProps) {
  return (
    <table className="mt-[2px] w-full table-fixed border-collapse self-start text-center text-[7px] font-bold text-[#0e2841]">
      <thead>
        <tr className="h-[30px] bg-[#76206c] leading-[11px] text-white">
          {head.map((h, i) => (
            <th
              key={h}
              className={`relative p-0 whitespace-nowrap ${widths[i]} ${active && i === 0 ? "shadow-[inset_0_0_0_1px_#fff] outline-1 outline-[#107c41]" : ""}`}
            >
              {h.split("\n").map((l) => <span key={l} className="block">{l}</span>)}
              {active && i === 0 && <span className="absolute -right-[2px] -bottom-[2px] z-10 size-[3px] bg-[#107c41]" />}
            </th>
          ))}
        </tr>
      </thead>
      <tbody className="before:block before:h-[2px] before:content-['']">
        {data.map((r) => (
          <tr key={r[0]} className="h-[15px] leading-[9px]">
            {r.map((c, i) => <td key={i} className="p-0 whitespace-nowrap">{c}</td>)}
          </tr>
        ))}
      </tbody>
    </table>
  );
}

function Dashboard() {
  return (
    <main className="col-start-2 mt-[7px] self-start border border-[#1c3c66] pb-[3px] text-[#0e2841]">
      <div className="mt-[4px] mr-[15px] ml-[16px] grid h-[31px] grid-cols-[654fr_99fr] items-center border border-b-2 border-[#3cced0] pt-[2px] text-[11px] font-bold italic">
        <h1 className="pl-[60px] text-center whitespace-nowrap underline">Customer Services Performance Report</h1>
        <p className="justify-self-end pr-[41px] whitespace-nowrap underline">Report period: Jan 2020</p>
      </div>
      <div className="grid h-[16px] grid-cols-[207fr_273fr_304fr]">
        <h2 className="col-start-2 border-b border-[#6fd8da] text-center text-[11px] leading-[16px] font-bold whitespace-nowrap italic underline">
          Customer Satisfaction Overview
        </h2>
      </div>
      <div className="mt-[10px] grid grid-cols-[15fr_299fr_15fr_155fr_12fr_278fr_10fr] items-end">
        <div className="col-start-2"><SatisfactionChart /></div>
        <div className="col-start-4"><EffortChart /></div>
        <div className="col-start-6"><FunnelChart /></div>
      </div>
      <div className="mt-[9px] grid grid-cols-[13fr_152fr_18fr_131fr_14fr_156fr_19fr_121fr_16fr_129fr_15fr]">
        <div className="col-start-2"><OverallChart /></div>
        <div className="col-start-4">
          <DataTable
            head={["Lable", "Overall\nSatisfaction", "%"]}
            widths={["w-[37%]", "w-[37%]", "w-[26%]"]}
            data={[["Dissatisfied", "377", "16.7%"], ["Neutral", "217", "9.6%"], ["Satisfied", "1665", "73.7%"]]}
          />
        </div>
        <div className="col-start-6"><RecommendChart /></div>
        <div className="relative col-start-8">
          <DataTable
            active
            head={["Lable", "Call Product", "%"]}
            widths={["w-[40%]", "w-[40%]", "w-[20%]"]}
            data={[["Flight", "1326", "58.7%"], ["Hotel", "814", "36.0%"], ["Car", "88", "3.9%"], ["Package", "31", "1.4%"]]}
          />
          <button aria-label="Quick analysis" className="absolute -top-[13px] left-[51px] flex size-[14px] items-center justify-center rounded-[2px] border border-[#777] bg-white">
            <Icon w={9} h={9}>
              <path d="M4.500 1.200 5.800 2.500 4.500 3.800 3.200 2.500z" fill="#333" stroke="#333" strokeWidth=".4" />
              <path d="M1 7.300 2.800 4.600M1 7.500h3.500M6 6h2.400M7.200 4.800v2.400" stroke="#333" />
            </Icon>
          </button>
        </div>
        <div className="col-start-10">
          <DataTable
            head={["Lable", "Call\nReason", "%"]}
            widths={["w-[51%]", "w-[26%]", "w-[23%]"]}
            data={[["Reconfirm", "795", "35.19%"], ["Cancel", "566", "25.06%"], ["Change", "219", "9.69%"], ["Billing and Refunds", "182", "8.06%"]]}
          />
        </div>
      </div>
    </main>
  );
}

export default function App() {
  return (
    <div className={`flex min-h-screen flex-col overflow-hidden bg-[#e8e8f0] ${UI}`}>
      <TitleBar />
      <TabBar />
      <Ribbon />
      <FormulaBar />
      <ColumnHeaders />
      <div className="flex flex-1 bg-white">
        <RowHeaders />
        <div className={`grid flex-1 grid-cols-[5fr_786fr_198fr] ${SHEET}`}>
          <Dashboard />
        </div>
      </div>
    </div>
  );
}
